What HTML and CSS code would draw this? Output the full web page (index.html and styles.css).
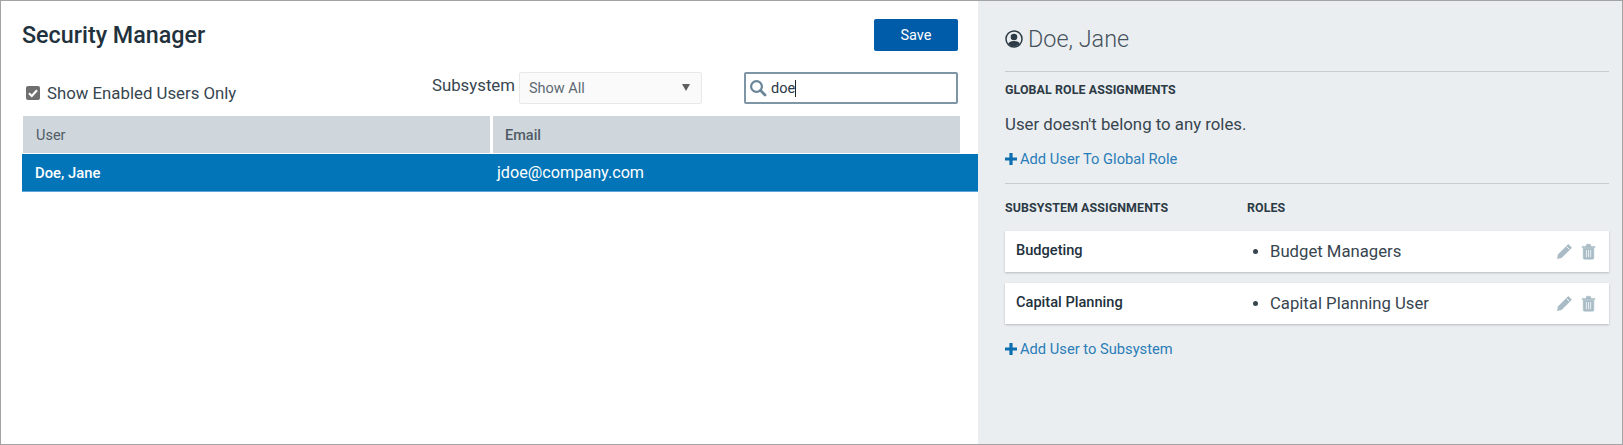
FILE: index.html
```html
<!DOCTYPE html>
<html lang="en">
<head>
<meta charset="utf-8">
<title>Security Manager</title>
<link rel="stylesheet" href="styles.css">
</head>
<body>
<div class="app">
  <main class="left">
    <div class="top">
      <h1 class="title">Security Manager</h1>
      <button class="save">Save</button>
    </div>
    <div class="filters">
      <label class="check"><span class="box"><svg viewBox="0 0 14 14" width="14" height="14"><path d="M3 7.2 5.8 10 11 4.3" fill="none" stroke="#fff" stroke-width="2.2"/></svg></span>Show Enabled Users Only</label>
      <div class="subsystem">
        <span class="sub-label">Subsystem</span>
        <div class="select"><span>Show All</span><i class="caret"></i></div>
      </div>
      <div class="search">
        <svg viewBox="0 0 18 18" width="18" height="18"><circle cx="7.5" cy="7.5" r="5.4" fill="none" stroke="#6a8598" stroke-width="2.2"/><path d="M11.6 11.6 16 16" stroke="#6a8598" stroke-width="2.8" stroke-linecap="round"/></svg>
        <span class="query">doe</span>
      </div>
    </div>
    <div class="thead">
      <div class="th th-user">User</div>
      <div class="th th-email">Email</div>
    </div>
    <div class="row">
      <div class="cell-user">Doe, Jane</div>
      <div class="cell-email">jdoe@company.com</div>
    </div>
  </main>
  <aside class="right">
    <h2 class="name">
      <svg viewBox="0 0 18 18" width="18" height="18"><defs><clipPath id="c"><circle cx="9" cy="9" r="7.4"/></clipPath></defs><circle cx="9" cy="9" r="8" fill="none" stroke="#2b3a45" stroke-width="1.5"/><circle cx="9" cy="7" r="3.3" fill="#2b3a45"/><ellipse cx="9" cy="15.5" rx="6.5" ry="4.6" fill="#2b3a45" clip-path="url(#c)"/></svg>
      Doe, Jane
    </h2>
    <section class="global">
      <h3 class="heading">GLOBAL ROLE ASSIGNMENTS</h3>
      <p class="empty">User doesn't belong to any roles.</p>
      <a class="add"><svg viewBox="0 0 12 12" width="12" height="12"><path d="M4.4 0h3.2v4.4H12v3.2H7.6V12H4.4V7.6H0V4.4h4.4z" fill="#0d6fb0"/></svg>Add User To Global Role</a>
    </section>
    <section class="subs">
      <div class="subs-head">
        <h3 class="heading col-a">SUBSYSTEM ASSIGNMENTS</h3>
        <h3 class="heading">ROLES</h3>
      </div>
      <div class="card">
        <div class="col-a card-name">Budgeting</div>
        <ul class="roles"><li>Budget Managers</li></ul>
        <div class="actions">
          <svg viewBox="0 0 16 16" width="16" height="16"><path d="M11.6 1 15 4.4 5.2 14.2 1 15l.8-4.2z" fill="#a9bcc6"/><path d="M10 3.4 12.6 6" stroke="#fff" stroke-width=".8"/></svg>
          <svg viewBox="0 0 14 16" width="14" height="16"><path d="M1 3.2h12v1.3H1zM4.6 3.2l.7-2h3.4l.7 2M2 5h10v9.2c0 .6-.5 1-1 1H3c-.5 0-1-.4-1-1z" fill="#a9bcc6" stroke="#a9bcc6" stroke-width=".5"/><path d="M5 6.5v7M7 6.5v7M9 6.5v7" stroke="#e6ecef" stroke-width="1"/></svg>
        </div>
      </div>
      <div class="card">
        <div class="col-a card-name">Capital Planning</div>
        <ul class="roles"><li>Capital Planning User</li></ul>
        <div class="actions">
          <svg viewBox="0 0 16 16" width="16" height="16"><path d="M11.6 1 15 4.4 5.2 14.2 1 15l.8-4.2z" fill="#a9bcc6"/><path d="M10 3.4 12.6 6" stroke="#fff" stroke-width=".8"/></svg>
          <svg viewBox="0 0 14 16" width="14" height="16"><path d="M1 3.2h12v1.3H1zM4.6 3.2l.7-2h3.4l.7 2M2 5h10v9.2c0 .6-.5 1-1 1H3c-.5 0-1-.4-1-1z" fill="#a9bcc6" stroke="#a9bcc6" stroke-width=".5"/><path d="M5 6.5v7M7 6.5v7M9 6.5v7" stroke="#e6ecef" stroke-width="1"/></svg>
        </div>
      </div>
      <a class="add add-sub"><svg viewBox="0 0 12 12" width="12" height="12"><path d="M4.4 0h3.2v4.4H12v3.2H7.6V12H4.4V7.6H0V4.4h4.4z" fill="#0d6fb0"/></svg>Add User to Subsystem</a>
    </section>
  </aside>
</div>
</body>
</html>
```

FILE: styles.css
```css
* { box-sizing: border-box; }
html, body { margin: 0; height: 100%; }
body { font-family: Roboto, "Liberation Sans", sans-serif; color: #2b3a45; background: #fff; overflow: hidden; }
.app { display: flex; height: 445px; width: 1623px; border: 1px solid #a3a3a3; }
.left { width: 977px; flex: none; padding-top: 17px; background: #fff; }
.right { flex: 1; min-width: 0; background: #ebeef1; padding: 22px 13px 0 27px; }

.top { display: flex; justify-content: space-between; align-items: flex-start; padding: 0 20px 0 21px; height: 51px; }
.title { margin: 0; padding-top: 3px; font-size: 23.3px; line-height: 28px; font-weight: 500; color: #22313c; }
.save { width: 84px; height: 32px; margin-top: 1px; border: 0; border-radius: 2px; background: #005ba8; color: #fff; font: 400 14.5px Roboto, sans-serif; }

.filters { display: flex; align-items: flex-start; height: 47px; padding: 0 20px 0 25px; }
.check { display: flex; align-items: center; gap: 7px; margin-top: 14px; height: 20px; font-size: 16.8px; color: #37454f; }
.box { width: 14px; height: 14px; border-radius: 2px; background: #6f6f6f; display: flex; align-items: center; justify-content: center; }
.subsystem { display: flex; align-items: flex-start; gap: 4px; margin-left: auto; }
.sub-label { font-size: 16.8px; line-height: 24px; margin-top: 4px; color: #37454f; }
.select { width: 183px; height: 32px; margin-top: 3px; border: 1px solid #e8e8e8; border-radius: 2px; background: #fafafa; display: flex; align-items: center; justify-content: space-between; padding: 0 11px 0 9px; font-size: 14.5px; color: #5d6a73; }
.caret { width: 0; height: 0; border-left: 4.5px solid transparent; border-right: 4.5px solid transparent; border-top: 7px solid #5f5f5f; margin-top: -2px; }
.search { width: 214px; height: 32px; margin-top: 3px; margin-left: 42px; border: 2px solid #7d95a5; border-radius: 2px; display: flex; align-items: center; gap: 4px; padding-left: 3px; background: #fff; }
.query { font-size: 14.5px; color: #2b3a45; border-right: 1px solid #222; line-height: 17px; }

.thead { display: flex; height: 38px; padding-left: 22px; }
.th { height: 37px; background: #cfd7dd; font-size: 14.5px; line-height: 39px; color: #4f5c65; }
.th-user { width: 467px; padding-left: 13px; }
.th-email { width: 467px; margin-left: 3px; padding-left: 12px; font-weight: 500; }
.row { display: flex; height: 38px; margin-left: 21px; background: #0275b8; border-bottom: 1px solid #5ea7d8; color: #fff; font-size: 14.8px; line-height: 38px; }
.cell-user { width: 477px; padding-left: 13px; font-weight: 500; }
.cell-email { font-size: 16.2px; margin-left: -2px; }

.name { display: flex; align-items: center; gap: 5px; margin: 0; height: 32px; font-size: 23.4px; font-weight: 300; color: #45525c; }
.global { border-top: 1px solid #c6ccd1; margin-top: 16px; padding-top: 11px; height: 112px; }
.heading { margin: 0; font-size: 12.4px; line-height: 14px; font-weight: 700; color: #2b3a45; letter-spacing: .1px; }
.empty { margin: 15px 0 0; font-size: 16.8px; line-height: 24px; color: #37454f; }
.add { display: flex; align-items: center; gap: 3px; margin-top: 14px; font-size: 14.7px; line-height: 18px; color: #2a7db8; }
.subs { border-top: 1px solid #c6ccd1; padding-top: 17px; }
.subs-head { display: flex; height: 30px; }
.col-a { width: 242px; flex: none; }
.card { display: flex; align-items: center; height: 41px; margin-bottom: 11px; padding-left: 11px; background: #fff; box-shadow: 0 1px 2px rgba(60,70,80,.3); }
.card .col-a { width: 231px; }
.card-name { font-size: 14.6px; font-weight: 500; color: #22313c; margin-top: -3px; }
.roles { margin: 0; padding: 0 0 0 23px; font-size: 16.7px; color: #37454f; flex: 1; }
.actions { display: flex; align-items: center; gap: 8px; padding-right: 13px; margin-top: -1px; }
.actions svg:first-child { width: 17px; height: 17px; }
.actions svg:last-child { width: 15px; height: 17px; }
.add-sub { margin-top: 16px; }
```
